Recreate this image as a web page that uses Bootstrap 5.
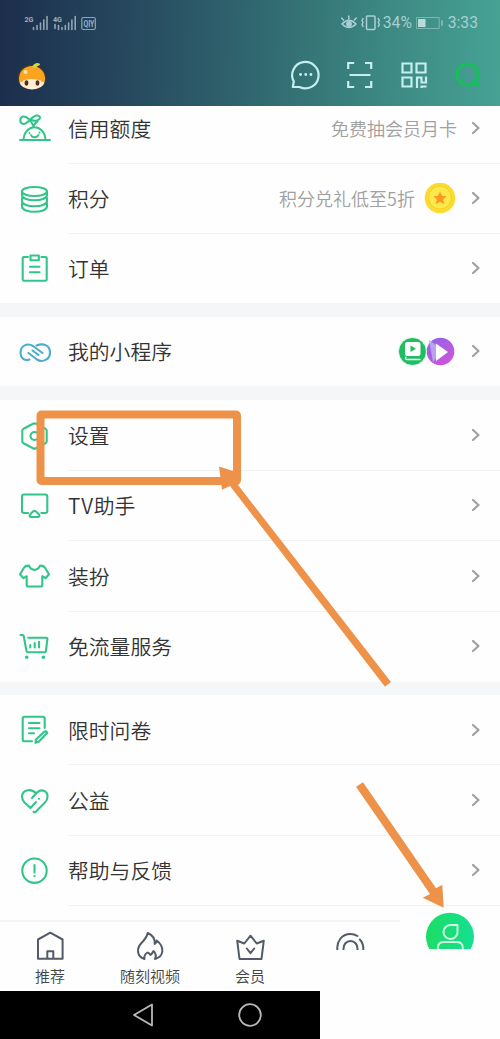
<!DOCTYPE html>
<html lang="zh-CN">
<head>
<meta charset="utf-8">
<meta name="viewport" content="width=device-width, initial-scale=1">
<title>我的</title>
<link rel="stylesheet" href="https://cdn.jsdelivr.net/npm/bootstrap@5.3.0/dist/css/bootstrap.min.css">
<style>
body{font-family:"Noto Sans CJK SC",sans-serif;width:500px;height:1039px;overflow:hidden;background:#fefefe;color:#333}
svg{display:block;flex:none;fill:none;stroke-linecap:round;stroke-linejoin:round}
.top-area{height:105.5px;background:linear-gradient(91deg,#1c2e4c 0,#274a5f 27%,#30666f 50%,#3b8580 74%,#47a294 100%)}
.status{height:45px;padding:0 22px 0 24px;color:#a7cfd0;font:15.7px/45px Roboto,sans-serif}
.tools{height:60px;padding:0 17px 0 16px;stroke:#c5eeee}
.line{height:70.4px;padding-right:19px}
.line .ico{width:68px;padding-left:19px;stroke:#32c58a;stroke-width:2.1}
.line .body{border-bottom:1.3px solid #f1f2f2;margin-right:-19px;padding-right:19px}
.line.last .body{border-color:transparent}
.name{font-size:20.8px;line-height:30px;font-weight:350}
.hint{font-size:18px;line-height:26px;color:#a0a0a0;font-weight:350}
.arr{stroke:#a0a0a0;stroke-width:2.200}
.gap-bar{height:14.5px;background:#f5f6f8}
.tabs{height:71px;border-top:2px solid #f4f4f4;stroke:#535b68;stroke-width:2}
.tabs>div{width:100px}
.tab-name{font-size:15px;line-height:20px;color:#444;font-weight:350}
.cut{height:27.5px;overflow:hidden}
.me{height:41px;overflow:hidden;margin-top:-14px;background:#fefefe}
.sys{height:48px;width:320px;background:#000;stroke:#b9b9b9;stroke-width:1.8}
.notes{left:0;top:0;pointer-events:none}
</style>
<script src="https://cdn.jsdelivr.net/npm/bootstrap@5.3.0/dist/js/bootstrap.bundle.min.js"></script>
</head>
<body class="position-relative">
<header class="top-area">
 <div class="status d-flex justify-content-between align-items-center">
  <svg width="74" height="18" viewBox="24 13 74 18" stroke="#8fa6b5" stroke-width="1.6" stroke-linecap="butt">
   <g fill="#9bb0be" stroke="none" font-family="Roboto" font-size="8" font-weight="700"><text x="24.5" y="21" textLength="9" lengthAdjust="spacingAndGlyphs">2G</text><text x="53" y="21" textLength="9" lengthAdjust="spacingAndGlyphs">4G</text><text x="83.4" y="26" font-size="8.5" textLength="11" lengthAdjust="spacingAndGlyphs">QIY</text></g>
   <path d="M33.500 28.500v-2M37 28.500v-4M40.500 28.500v-6.500M43.800 28.500v-9.500M47 28.500v-13M62 28.500v-2M65.300 28.500v-4M68.600 28.500v-6.500M71.900 28.500v-9.500M75.200 28.500v-13M55 23.500v4M58.500 24.500v4"/>
   <rect x="81.800" y="16.500" width="13.500" height="12" rx="1.500" stroke-width="1.2"/>
  </svg>
  <div class="d-flex align-items-center">
   <svg width="42" height="18" viewBox="341 14 42 18" stroke="#a9d0d2" stroke-width="1.500"><path d="M342 24q7-7.500 14 0-7 7-14 0M348.800 19v-3M343.500 20l-2-2M354.300 20l2-2"/><circle cx="349" cy="24" r="2.200" fill="#a9d0d2"/><rect x="366.500" y="16" width="8.500" height="13.500" rx="1"/><path d="M363 18.500l-1 2 1 2-1 2 1 2M378.300 18.500l1 2-1 2 1 2-1 2"/></svg>
   <span style="width:33px">34%</span>
   <svg width="28" height="14" viewBox="0 0 28 14" stroke="#7fb4b2"><rect x=".7" y="1.500" width="22.500" height="11"/><path d="M2 3h7.500v8H2z" fill="#b7dbdb" stroke="none"/><path d="M26 5v4" stroke-width="2"/></svg>
   <span class="ms-1">3:33</span>
  </div>
 </div>
 <div class="tools d-flex align-items-center justify-content-between">
  <svg width="32" height="32" viewBox="16 60 32 32" stroke="none"><ellipse cx="32" cy="78.500" rx="14.300" ry="12.800" fill="#45382c"/><ellipse cx="32" cy="82" rx="12.500" ry="8.500" fill="#fff0d5"/><path d="M19 80c0-8 6-13 13-13s13 5 13.200 13c-1 4-3 4-4.500 1.500l-4-1-4.700-.5-4.700.5-4 1C21.500 84 20 84 19 80" fill="#fba41f"/><path d="M32 68c2-4 6-5 8-3 .5 2-3 1-4 4" fill="#cfd64c"/><ellipse cx="26.500" cy="84" rx="1.900" ry="2.800" fill="#5b2b18"/><ellipse cx="37.500" cy="84" rx="1.900" ry="2.800" fill="#5b2b18"/><circle cx="25.500" cy="73" r="2" fill="#ffe8a5"/></svg>
  <svg width="194" height="34" viewBox="289 58 194 34" stroke-width="2.200">
   <path d="M292.800 87l1-5.500A13.200 13.200 0 1 1 299.500 87z"/><path d="M300.500 74.500h.1M305.700 74.500h.1M310.900 74.500h.1" stroke-width="2.800"/>
   <g stroke-linecap="butt" stroke-linejoin="miter"><path d="M348.200 69v-6h6M365 63h6.200v6M348.200 81v6h6M365 87h6.200v-6M349.500 75h21"/>
   <path d="M402.500 63.500h9v9h-9zM416.500 63.500h9v9h-9zM402.500 77.500h9v9h-9zM417 88V77.500h4.500v5h4.500v-6M421.500 88v-1.500h5"/></g>
   <g stroke="#12c257" stroke-width="2.900"><circle cx="467.700" cy="74.500" r="10.600"/><path d="M474.500 82l4.500 3.500"/></g>
  </svg>
 </div>
</header>
<main>
 <div class="line d-flex" style="height:58px"><div class="ico" style="padding-top:6px"><svg width="32" height="32"><path d="M1 28h30M4.500 27.500c1.500-16.500 20.500-16.500 22 0M14.500 14.500C13 10 8 3.500 4 4.500c-4 1.500-3.500 7 .5 7.500C9 12.500 11 5 17.500 3.500c3-.5 4.500 2 2.500 4-2 1.500-5 1.500-7.500.5M14.500 14.500c1-3 2-4 4-5" stroke-width="2"/><path d="M12 23c1 3 6 3 7.500 0M10.500 21v.3M20.500 20.500v.3" stroke-width="1.800"/></svg></div><div class="body flex-grow-1 d-flex align-items-center pb-2"><span class="name me-auto" style="margin-top:-4px">信用额度</span><span class="hint" style="margin:-5px 14px 0 0">免费抽会员月卡</span><svg class="arr" style="margin-top:-5px" width="10" height="14"><path d="M2 2l5.500 5L2 12"/></svg></div></div>
 <div class="line d-flex"><div class="ico d-flex align-items-center"><svg width="32" height="32"><ellipse cx="15.500" cy="8.500" rx="12.500" ry="4.500"/><path d="M3 8.500v3.500c0 7 25 7 25 0V8.500M3 15v3c0 7 25 7 25 0v-3M3 20.500v3c0 7 25 7 25 0v-3"/></svg></div><div class="body flex-grow-1 d-flex align-items-center"><span class="name me-auto">积分</span><span class="hint" style="margin-right:9px">积分兑礼低至5折</span><svg width="32" height="32" style="margin-right:15px"><circle cx="16" cy="16" r="15.300" fill="#fbdc2d"/><circle cx="16" cy="15.700" r="11.500" fill="#fbe84d" stroke="#f5cf26"/><path d="M16 9.500l2 4.300 4.600.5-3.400 3.200 1 4.700-4.200-2.400-4.200 2.400 1-4.700-3.400-3.200 4.600-.5z" fill="#f99a20"/></svg><svg class="arr" width="10" height="14"><path d="M2 2l5.500 5L2 12"/></svg></div></div>
 <div class="line last d-flex" style="height:69px"><div class="ico d-flex align-items-center"><svg width="32" height="32"><path d="M9 5H5q-1.300 0-1.300 1.300v21.200q0 1.300 1.300 1.300h21.400q1.300 0 1.300-1.300V6.300Q27.700 5 26.400 5h-4M11.500 3.500h8.300v4.700h-8.300zM11 14.800h9.500M11 20.200h9.500"/></svg></div><div class="body flex-grow-1 d-flex align-items-center"><span class="name me-auto">订单</span><svg class="arr" width="10" height="14"><path d="M2 2l5.500 5L2 12"/></svg></div></div>
 <div class="gap-bar"></div>
 <div class="line last d-flex" style="height:69px"><div class="ico d-flex align-items-center"><svg width="32" height="32" stroke="#4cacd0"><path d="M10.500 23.500C5 25.500 1.500 21.500 1.500 17c0-7.500 7-10.500 12.500-7l9.500 7M17.500 9.500C25 6.500 31 10 31 16.500c0 7-7.500 10.500-13 7L9.500 17M13.500 14.500l6 4.500"/></svg></div><div class="body flex-grow-1 d-flex align-items-center"><span class="name me-auto">我的小程序</span><svg width="58" height="30" viewBox="398 337 58 30" style="margin-right:15px"><circle cx="440.500" cy="352.500" r="13.800" fill="url(#vio)"/><path d="M429 341l14 10-10 12z" fill="#b9a2f5"/><path d="M436 344.500l12 8.500-12 9z" fill="#fff"/><circle cx="412.500" cy="352.500" r="14" fill="#20bd63" stroke="#fff" stroke-width=".8"/><rect x="405" y="343" width="15.500" height="14" rx="2.500" fill="#fff"/><path d="M410.500 346.500l5.500 3.300-5.500 3.300z" fill="#20bd63"/><path d="M406 358q-1.500 2.500 1 2.500h13" stroke="#fff" stroke-width="1.300"/><defs><linearGradient id="vio" x2=".7" y2="1"><stop stop-color="#8c64ec"/><stop offset="1" stop-color="#cc55dc"/></linearGradient></defs></svg><svg class="arr" width="10" height="14"><path d="M2 2l5.500 5L2 12"/></svg></div></div>
 <div class="gap-bar" style="height:14px"></div>
 <div class="line d-flex"><div class="ico d-flex align-items-center"><svg width="32" height="32"><path d="M14 3.800L4.500 8.800q-1.200.7-1.200 2v10.400q0 1.300 1.200 2l9.500 5q1.500.8 3 0l9.500-5q1.200-.7 1.200-2V10.800q0-1.300-1.200-2L17 3.800q-1.500-.8-3 0"/><circle cx="15.500" cy="16" r="4"/></svg></div><div class="body flex-grow-1 d-flex align-items-center"><span class="name me-auto">设置</span><svg class="arr" width="10" height="14"><path d="M2 2l5.500 5L2 12"/></svg></div></div>
 <div class="line d-flex"><div class="ico d-flex align-items-center"><svg width="32" height="32"><path d="M9 23H5q-2 0-2-2V6.500q0-2 2-2h21.300q2 0 2 2V21q0 2-2 2h-4M14 21.500q1.500-1.300 3 0l3 3c1 1.500 0 2.500-1 2.500h-7c-1 0-2-1-1-2.500z"/></svg></div><div class="body flex-grow-1 d-flex align-items-center"><span class="name me-auto"><span style="letter-spacing:.8px">TV</span>助手</span><svg class="arr" width="10" height="14"><path d="M2 2l5.500 5L2 12"/></svg></div></div>
 <div class="line d-flex"><div class="ico d-flex align-items-center"><svg width="32" height="32"><path d="M10 5.700c2 5.500 9 5.500 11 0q3-.5 5 2l4 6.500-3.500 4-3.200-2V25q0 1.500-1.500 1.500H9.200q-1.500 0-1.500-1.500v-8.800l-3.200 2-3.500-4 4-6.500q2-2.500 5-2"/></svg></div><div class="body flex-grow-1 d-flex align-items-center"><span class="name me-auto">装扮</span><svg class="arr" width="10" height="14"><path d="M2 2l5.500 5L2 12"/></svg></div></div>
 <div class="line last d-flex"><div class="ico d-flex align-items-center"><svg width="32" height="32"><path d="M1.500 4h2q1 0 1.200 1L7.500 20q.3 1.300 1.500 1.300h16.500q1.200 0 1.400-1.300l1.500-12q.1-1.300-1.200-1.300h-18M11.300 14v2.500M15.700 12v4.500M20 10.700v5.800"/><path d="M7.700 26.300h.1M24.300 26.300h.1" stroke-width="3.500"/></svg></div><div class="body flex-grow-1 d-flex align-items-center"><span class="name me-auto">免流量服务</span><svg class="arr" width="10" height="14"><path d="M2 2l5.500 5L2 12"/></svg></div></div>
 <div class="gap-bar" style="height:13px"></div>
 <div class="line d-flex"><div class="ico d-flex align-items-center"><svg width="32" height="32"><path d="M13 27.300H5.500q-1.800 0-1.800-1.800v-21q0-1.800 1.800-1.800h18.400q1.800 0 1.800 1.800V14M10 9h10.500M10 14.200h10.500M10 19.300h5M17 25.500l8.500-8q2-.5 2.800 1.300L20 27.500l-3.500 1.300z"/></svg></div><div class="body flex-grow-1 d-flex align-items-center"><span class="name me-auto">限时问卷</span><svg class="arr" width="10" height="14"><path d="M2 2l5.500 5L2 12"/></svg></div></div>
 <div class="line d-flex"><div class="ico d-flex align-items-center"><svg width="32" height="32"><path d="M17 8.500C12.500 3 3.500 4.500 3 11.500c0 3 1 4.500 2.500 6l6 5.500 5.500-6M13 13l5-5.500c5-4.500 11-1 10.500 4.500 0 2.500-1.500 4.500-3 6L16.500 27q-1 .8-2-.3M20 13.700h.1"/></svg></div><div class="body flex-grow-1 d-flex align-items-center"><span class="name me-auto">公益</span><svg class="arr" width="10" height="14"><path d="M2 2l5.500 5L2 12"/></svg></div></div>
 <div class="line d-flex"><div class="ico d-flex align-items-center"><svg width="32" height="32"><circle cx="15.500" cy="15.700" r="12.200"/><path d="M15.500 10v7.500M15.500 21v.2"/></svg></div><div class="body flex-grow-1 d-flex align-items-center"><span class="name me-auto">帮助与反馈</span><svg class="arr" width="10" height="14"><path d="M2 2l5.500 5L2 12"/></svg></div></div>
 <div style="height:14.200px"></div>
</main>
<nav class="tabs d-flex text-center">
 <div><svg class="mx-auto" style="margin-top:8px" width="32" height="32"><path d="M4 9.500l12.300-6.800 12.300 6.800v19.200H4zM13.300 28.500v-7.300h6v7.300"/></svg><div class="tab-name mt-1">推荐</div></div>
 <div><svg class="mx-auto" style="margin-top:8px" width="32" height="32"><path d="M10.500 29C2 26 3 18 7 13.500c3.500-3.500 6-6.500 6.700-10.500 5 2 7.300 6 7 11 1.500-1 2-2 2-3.500C31 17 30 26.500 21 29c1.500-3 .5-6-1.500-8-1 1.500-1.500 3-3 4-1-1.500-1.500-2.500-3-2.500-2.500 1.500-3.500 4-3 6.500"/></svg><div class="tab-name mt-1">随刻视频</div></div>
 <div><svg class="mx-auto" style="margin-top:8px" width="32" height="32"><path d="M3.200 10.700l7.100 2.800L16.500 5.700l6.200 7.800 7.100-2.800L27.500 29h-22zM12.800 18.500l3.700 4.700 3.700-4.700"/></svg><div class="tab-name mt-1">会员</div></div>
 <div class="cut"><svg class="mx-auto" style="margin-top:8px" width="32" height="32"><path d="M3.400 20c-1-8 4-16 13-16q4 0 7 2M25.800 9.500q3.800 4 3.500 10M9.500 20c-1-12 15-12 14 0"/></svg></div>
 <div class="me"><svg width="100" height="48" viewBox="400 908 100 48"><circle cx="450" cy="936.700" r="24" fill="url(#gr)" stroke="none"/><path d="M457.500 925v6.500a7 7 0 1 1-7-6.500zM438 951c-1-7.500 2-9 6-9h12.500c5 0 7 2.500 6 9" stroke="#d5ffe5" stroke-width="1.900"/><defs><linearGradient id="gr"><stop stop-color="#1bdd65"/><stop offset="1" stop-color="#16df90"/></linearGradient></defs></svg></div>
</nav>
<footer class="sys d-flex"><svg width="320" height="48"><path d="M134 24l18-10.500v21z"/><circle cx="250" cy="24" r="10.800"/></svg></footer>
<svg class="notes position-absolute" width="500" height="1039"><rect x="40.500" y="414.500" width="196.500" height="66.500" rx="1" stroke="#ee924a" stroke-width="8"/><path fill="#ee924a" d="M219 466.500l22 7-1.500 9.500-1.500 2L391 682l-6 4.700L230 486l-8 3.700zM363 782.300l73 106 6.300-3.600 1.400 23-21-10 7.300-3.700L356 786.700z"/></svg>
</body>
</html>
